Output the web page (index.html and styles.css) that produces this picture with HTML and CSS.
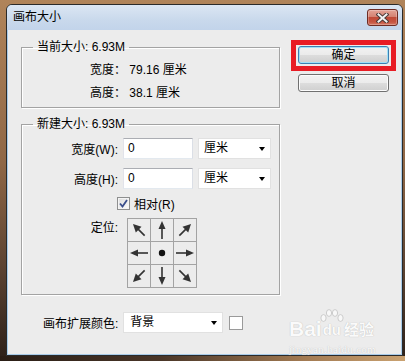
FILE: index.html
```html
<!DOCTYPE html>
<html lang="zh-CN">
<head>
  <meta charset="UTF-8">
  <title>画布大小</title>
  <link rel="stylesheet" href="styles.css">
</head>
<body>
  <div class="window">
    <!-- Barra de título -->
    <div class="titlebar">
      <span class="title">画布大小</span>
      <button class="close-btn">
        <svg width="13" height="10" viewBox="0 0 13 10">
          <path d="M2.5 1.5 L10.5 8.5 M10.5 1.5 L2.5 8.5" stroke="#4a3a38" stroke-width="4" stroke-linecap="square"/>
          <path d="M2.5 1.5 L10.5 8.5 M10.5 1.5 L2.5 8.5" stroke="#f2f2f2" stroke-width="2" stroke-linecap="square"/>
        </svg>
      </button>
    </div>

    <div class="client">
      <div class="main">
        <fieldset class="group">
          <legend>当前大小: 6.93M</legend>
          <div class="info">
            <div class="info-row">宽度： 79.16 厘米</div>
            <div class="info-row">高度： 38.1 厘米</div>
          </div>
        </fieldset>

        <fieldset class="group group-new">
          <legend>新建大小: 6.93M</legend>
          <div class="form">
            <div class="frow">
              <label class="flabel">宽度(W):</label>
              <div class="textbox">0</div>
              <div class="combo">厘米<span class="caret"></span></div>
            </div>
            <div class="frow">
              <label class="flabel">高度(H):</label>
              <div class="textbox">0</div>
              <div class="combo">厘米<span class="caret"></span></div>
            </div>
            <div class="check-row">
              <span class="checkbox">
                <svg width="9" height="9" viewBox="0 0 9 9"><path d="M1 4.5 L3.5 7.5 L8 1" fill="none" stroke="#3b4f8c" stroke-width="1.8"/></svg>
              </span>
              <span>相对(R)</span>
            </div>
            <div class="anchor-row">
              <label class="flabel">定位:</label>
              <div class="anchor">
                <div class="cell"><svg viewBox="0 0 22 22"><g transform="rotate(-45 11 11)"><path d="M11 2.5 L7 10.5 L15 10.5 Z" fill="#333"/><path d="M11 9 V19" stroke="#333" stroke-width="1.6"/></g></svg></div>
                <div class="cell"><svg viewBox="0 0 22 22"><g><path d="M11 2 L7.5 10 L14.5 10 Z" fill="#333"/><path d="M11 9 V20" stroke="#333" stroke-width="1.6"/></g></svg></div>
                <div class="cell"><svg viewBox="0 0 22 22"><g transform="rotate(45 11 11)"><path d="M11 2.5 L7 10.5 L15 10.5 Z" fill="#333"/><path d="M11 9 V19" stroke="#333" stroke-width="1.6"/></g></svg></div>
                <div class="cell"><svg viewBox="0 0 22 22"><g transform="rotate(-90 11 11)"><path d="M11 2 L7.5 10 L14.5 10 Z" fill="#333"/><path d="M11 9 V20" stroke="#333" stroke-width="1.6"/></g></svg></div>
                <div class="cell"><svg viewBox="0 0 22 22"><circle cx="11" cy="11" r="3.2" fill="#111"/></svg></div>
                <div class="cell"><svg viewBox="0 0 22 22"><g transform="rotate(90 11 11)"><path d="M11 2 L7.5 10 L14.5 10 Z" fill="#333"/><path d="M11 9 V20" stroke="#333" stroke-width="1.6"/></g></svg></div>
                <div class="cell"><svg viewBox="0 0 22 22"><g transform="rotate(-135 11 11)"><path d="M11 2.5 L7 10.5 L15 10.5 Z" fill="#333"/><path d="M11 9 V19" stroke="#333" stroke-width="1.6"/></g></svg></div>
                <div class="cell"><svg viewBox="0 0 22 22"><g transform="rotate(180 11 11)"><path d="M11 2 L7.5 10 L14.5 10 Z" fill="#333"/><path d="M11 9 V20" stroke="#333" stroke-width="1.6"/></g></svg></div>
                <div class="cell"><svg viewBox="0 0 22 22"><g transform="rotate(135 11 11)"><path d="M11 2.5 L7 10.5 L15 10.5 Z" fill="#333"/><path d="M11 9 V19" stroke="#333" stroke-width="1.6"/></g></svg></div>
              </div>
            </div>
          </div>
        </fieldset>

        <div class="ext-row">
          <label>画布扩展颜色:</label>
          <div class="combo combo-wide">背景<span class="caret"></span></div>
          <span class="swatch"></span>
        </div>
      </div>

      <div class="side">
        <div class="mark">
          <button class="btn btn-default">确定</button>
        </div>
        <button class="btn btn-cancel">取消</button>
      </div>
    </div>

    <!-- Marca d'água -->
    <div class="watermark">
      <div class="wm-logo">
        <span class="wm-bai">Bai</span>
        <span class="wm-du">
          <svg class="wm-paw" width="24" height="14" viewBox="0 0 24 14">
            <ellipse cx="3.5" cy="9" rx="2.6" ry="3.4" />
            <ellipse cx="9" cy="4" rx="2.6" ry="3.4" />
            <ellipse cx="15" cy="4" rx="2.6" ry="3.4" />
            <ellipse cx="20.5" cy="9" rx="2.6" ry="3.4" />
          </svg>du</span>
        <span class="wm-jy">经验</span>
      </div>
      <div class="wm-url">jingyan.baidu.com</div>
    </div>
  </div>
</body>
</html>
```

FILE: styles.css
```css
/* Reset básico */
* { margin: 0; padding: 0; box-sizing: border-box; }
body {
  width: 405px; height: 361px; overflow: hidden;
  padding: 4px 0 0 6px;
  font: 12px "Liberation Sans", "Noto Sans CJK SC", sans-serif;
  color: #000;
  background:
    linear-gradient(to right, #2a1e16, #4a3628 40%, #a27a52 75%, #caa271) bottom / 100% 5px no-repeat,
    linear-gradient(#b0845a, #8f6746 45%, #5a4231 75%, #2c2019);
}
.window {
  position: relative;
  width: 397px; height: 352px;
  border: 1px solid #2a2a2a;
  border-radius: 6px 6px 0 0;
  background: #a9cbe8;
  display: flex; flex-direction: column;
}
.titlebar {
  height: 25px; flex: none;
  display: flex; align-items: flex-start;
  padding-left: 6px;
  border-radius: 5px 5px 0 0;
  background: linear-gradient(#dbe6f3, #c9d9ec 60%, #c2d4ea);
}
.title { line-height: 25px; font-size: 12px; }
.close-btn {
  margin: 4px 4px 0 auto;
  width: 31px; height: 17px;
  border: 1px solid #6e2c24; border-radius: 3px;
  background: linear-gradient(#e3a396, #d48272 45%, #c04a37 50%, #c65441 80%, #d57a66);
  box-shadow: inset 0 0 0 1px rgba(255,255,255,0.25);
  display: flex; align-items: center; justify-content: center;
}
.close-btn svg { display: block; }

.client {
  flex: 1;
  margin: 0 1px 1px 1px;
  background: #ececec;
  display: flex;
  padding-left: 13px;
}
.main { width: 259px; padding-top: 9px; }

/* Grupos */
.group {
  border: 1px solid #a3a3a3;
  box-shadow: inset 1px 1px 0 #fff, 1px 1px 0 #fff;
  min-width: 0;
}
.group legend {
  margin-left: 11px; padding: 0 4px;
  height: 16px; line-height: 16px;
}
.info { padding: 4px 0 2px 68px; }
.info-row { height: 23px; line-height: 23px; }

.group-new { margin-top: 8px; }
.form { padding: 6px 0 6px 0; }
.frow { display: flex; align-items: center; height: 21px; margin-bottom: 9px; }
.flabel { width: 96px; text-align: right; margin-right: 5px; flex: none; }
.textbox {
  width: 70px; height: 21px; line-height: 19px;
  padding-left: 4px;
  background: #fff;
  border: 1px solid; border-color: #abadb3 #dbdfe6 #e3e9ef #e2e3ea;
  margin-right: 5px;
}
.combo {
  position: relative;
  width: 73px; height: 21px; line-height: 19px;
  padding-left: 5px;
  background: #fff;
  border: 1px solid #e1e1e1;
}
.caret {
  position: absolute; right: 5px; top: 8px;
  border-left: 3.5px solid transparent; border-right: 3.5px solid transparent;
  border-top: 4px solid #000;
}
.check-row {
  display: flex; align-items: center; gap: 4px;
  height: 16px; margin: -3px 0 7px 95px;
}
.checkbox {
  width: 13px; height: 13px;
  border: 1px solid #8e8f8f;
  background: linear-gradient(135deg, #dcdcdc, #fdfdfd);
  box-shadow: inset 0 0 0 1px #f4f4f4;
  display: flex; align-items: center; justify-content: center;
}
.checkbox svg { display: block; }
.anchor-row { display: flex; align-items: flex-start; }
.anchor-row .flabel { margin-right: 9px; line-height: 20px; }
.anchor {
  display: grid;
  grid-template-columns: repeat(3, 22px);
  grid-template-rows: repeat(3, 22px);
  gap: 1px; padding: 1px;
  background: #a3a3a3;
}
.cell { background: #ececec; }
.cell svg { display: block; width: 22px; height: 22px; }

.ext-row {
  display: flex; align-items: center;
  margin-top: 17px; padding-left: 22px;
  height: 21px;
}
.ext-row label { margin-right: 5px; }
.combo-wide { width: 100px; padding-left: 6px; }
.swatch {
  width: 14px; height: 14px; margin-left: 6px;
  background: #fff; border: 1px solid #9a9a9a;
}

/* Botões */
.side { margin-left: 11px; padding-top: 10px; display: flex; flex-direction: column; align-items: flex-start; }
.mark { border: 5px solid #e81c24; padding: 1px 2px 2px 2px; }
.btn {
  width: 91px; height: 18px;
  font: 12px "Liberation Sans", "Noto Sans CJK SC", sans-serif;
  border: 1px solid #707070; border-radius: 3px;
  background: linear-gradient(#f2f2f2, #ebebeb 50%, #dddddd 50%, #cfcfcf);
  box-shadow: inset 0 0 0 1px #fcfcfc;
  line-height: 16px;
  display: block;
}
.btn-default {
  border-color: #3c7fb1;
  box-shadow: inset 0 0 0 1px #9fe0f7;
}
.btn-cancel { margin: 3px 0 0 7px; }

/* Marca d'água */
.watermark {
  position: absolute; left: 282px; top: 299px;
  color: #fafafa;
  text-shadow: 0 0 1px #b0b0b0;
}
.wm-logo { display: flex; align-items: flex-end; height: 34px; }
.wm-bai { font: bold 21px/18px "Liberation Sans", sans-serif; }
.wm-du { position: relative; font: bold 15px/17px "Liberation Sans", sans-serif; margin-left: 1px; }
.wm-paw { position: absolute; left: -3px; top: -12px; fill: #f8f8f8; stroke: #c2c2c2; stroke-width: 0.8; }
.wm-jy { font: bold 15px/18px "Noto Sans CJK SC", sans-serif; margin-left: 3px; }
.wm-url { font: 11px/14px "Liberation Serif", serif; margin-top: 4px; letter-spacing: 0.3px; }
```
